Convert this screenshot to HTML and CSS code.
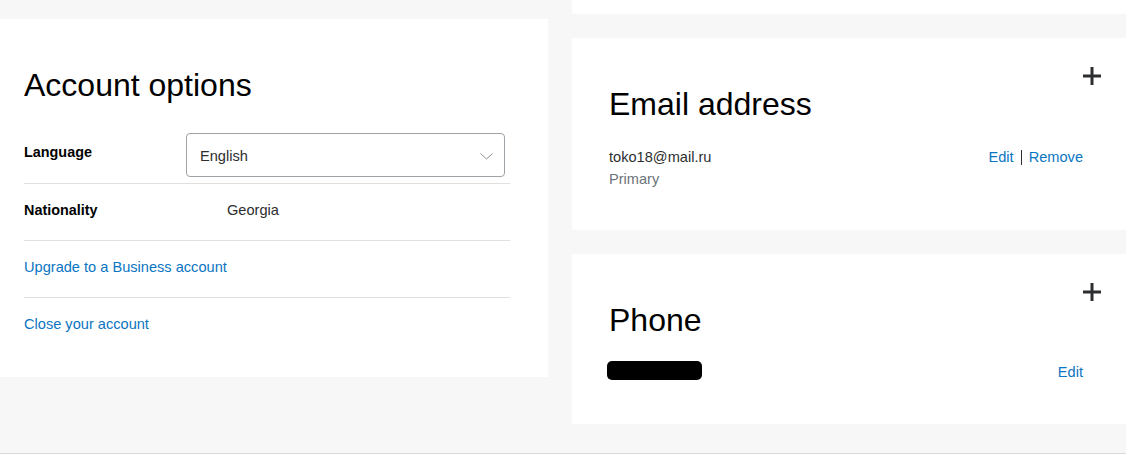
FILE: index.html
```html
<!DOCTYPE html>
<html lang="en">
<head>
    <meta charset="UTF-8">
    <meta name="viewport" content="width=device-width, initial-scale=1.0">
    <title>Account settings</title>
    <link rel="stylesheet" href="styles.css">
</head>
<body>
    <div class="page">
        <div class="left-col">
            <section class="card options">
                <h2>Account options</h2>

                <div class="row row-lang">
                    <span class="label">Language</span>
                    <div class="select">
                        <span>English</span>
                        <svg class="chevron" width="13" height="7" viewBox="0 0 13 7">
                            <polyline points="0.5,0.5 6.5,6 12.5,0.5" fill="none" stroke="#8a8f92" stroke-width="1"/>
                        </svg>
                    </div>
                </div>

                <div class="row">
                    <span class="label label-wide">Nationality</span>
                    <span class="value">Georgia</span>
                </div>

                <div class="row">
                    <a href="#" class="link">Upgrade to a Business account</a>
                </div>

                <div class="row row-last">
                    <a href="#" class="link">Close your account</a>
                </div>
            </section>
        </div>

        <div class="right-col">
            <div class="card card-stub"></div>

            <section class="card info email">
                <div class="card-top">
                    <button class="add" aria-label="Add email">
                        <svg width="18" height="18" viewBox="0 0 18 18">
                            <path d="M9 0v18M0 9h18" stroke="#2c2e2f" stroke-width="3"/>
                        </svg>
                    </button>
                </div>
                <h2>Email address</h2>
                <div class="info-row">
                    <div>
                        <div class="info-text">toko18@mail.ru</div>
                        <div class="info-sub">Primary</div>
                    </div>
                    <div class="actions">
                        <a href="#" class="link">Edit</a>
                        <span class="sep"></span>
                        <a href="#" class="link">Remove</a>
                    </div>
                </div>
            </section>

            <section class="card info phone">
                <div class="card-top">
                    <button class="add" aria-label="Add phone">
                        <svg width="18" height="18" viewBox="0 0 18 18">
                            <path d="M9 0v18M0 9h18" stroke="#2c2e2f" stroke-width="3"/>
                        </svg>
                    </button>
                </div>
                <h2>Phone</h2>
                <div class="info-row phone-row">
                    <div class="redacted"></div>
                    <div class="actions">
                        <a href="#" class="link">Edit</a>
                    </div>
                </div>
            </section>
        </div>
    </div>
</body>
</html>
```

FILE: styles.css
```css
body {
    margin: 0;
    font-family: "Liberation Sans", Arial, sans-serif;
    font-size: 14.6px;
    line-height: 20px;
    color: #2c2e2f;
    background-color: #f7f7f7;
}

.page {
    display: flex;
    gap: 24px;
    height: 453px;
    border-bottom: 1px solid #d9d9d9;
    overflow: hidden;
}

.left-col {
    width: 548px;
    padding-top: 19px;
}

.right-col {
    flex: 1;
    display: flex;
    flex-direction: column;
    gap: 24px;
}

.card {
    background-color: white;
}

h2 {
    margin: 0;
    font-size: 32px;
    line-height: 40px;
    font-weight: normal;
    color: #000;
}

/* Account options */
.options {
    padding: 46px 38px 43px 24px;
}

.options h2 {
    margin-bottom: 28px;
}

.row {
    display: flex;
    align-items: flex-start;
    padding: 16px 0 20px;
    border-bottom: 1px solid #e0e0e0;
}

.row-lang {
    padding: 0 0 6px;
}

.row-last {
    border-bottom: none;
    padding-bottom: 0;
}

.label {
    width: 162px;
    font-weight: bold;
    color: #000;
    font-size: 14.4px;
}

.row-lang .label {
    margin-top: 9px;
}

.label-wide {
    width: 203px;
}

.value {
    color: #2c2e2f;
}

.select {
    box-sizing: border-box;
    width: 319px;
    height: 44px;
    border: 1px solid #9da3a6;
    border-radius: 4px;
    padding: 2px 11px 0 13px;
    display: flex;
    align-items: center;
    justify-content: space-between;
    color: #2c2e2f;
}

.chevron {
    display: block;
}

.link {
    color: #0a75c2;
    text-decoration: none;
}

/* Right column cards */
.card-stub {
    height: 14px;
}

.info {
    padding: 29px 25px 40px 37px;
}

.card-top {
    display: flex;
    justify-content: flex-end;
    height: 18px;
}

.add {
    border: none;
    background: none;
    padding: 0;
    width: 18px;
    height: 18px;
    cursor: pointer;
}

.add svg {
    display: block;
}

.email h2 {
    margin-top: -1px;
}

.phone {
    padding-bottom: 41px;
}

.phone h2 {
    margin-top: -1px;
}

.info-row {
    display: flex;
    justify-content: space-between;
    align-items: flex-start;
    margin-top: 22px;
    padding-right: 18px;
    line-height: 22px;
}

.info-text {
    color: #2c2e2f;
}

.info-sub {
    color: #6c7378;
}

.actions {
    display: flex;
    align-items: center;
    gap: 7px;
}

.sep {
    width: 1px;
    height: 15px;
    background-color: #2c2e2f;
}

.phone-row {
    margin-top: 21px;
}

.redacted {
    width: 95px;
    height: 19px;
    margin-left: -2px;
    background-color: #000;
    border-radius: 5px;
}
```
